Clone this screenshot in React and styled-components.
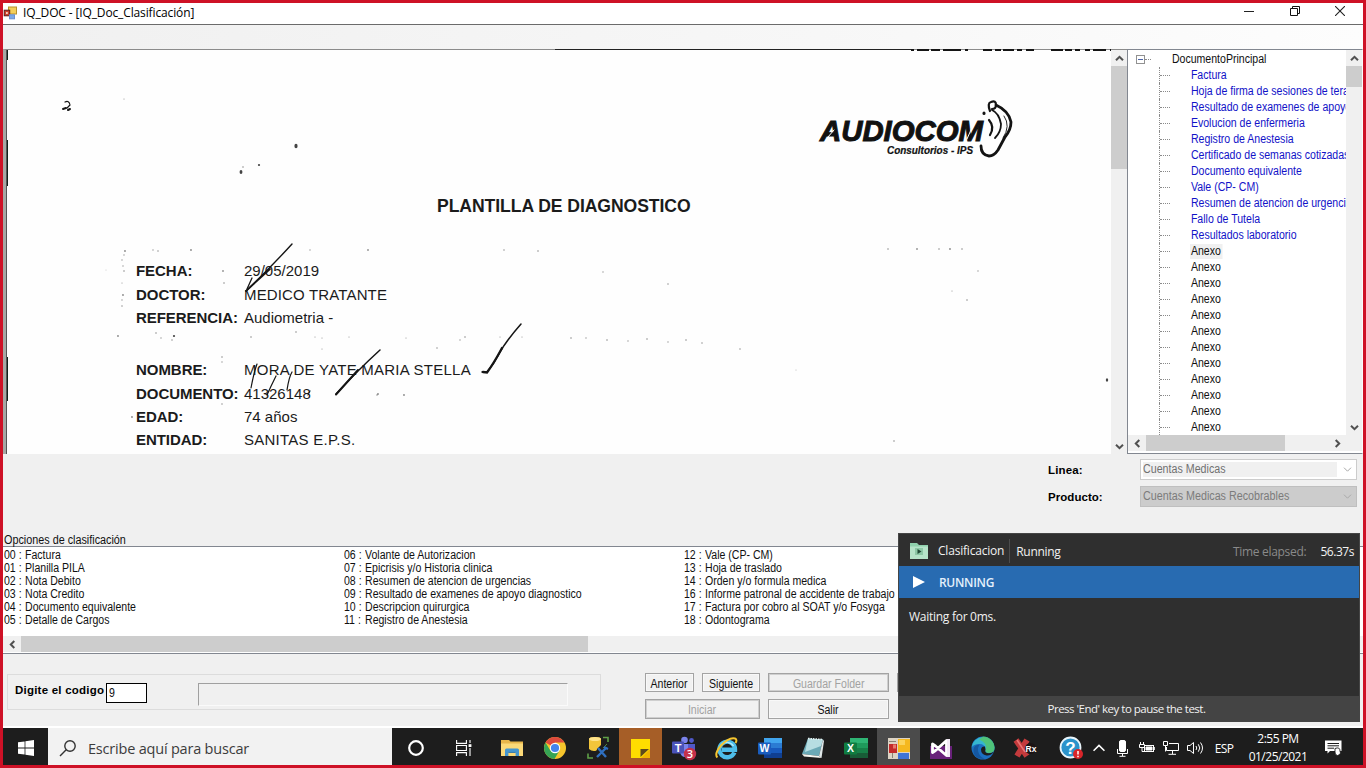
import React from "react";
import styled, { createGlobalStyle, css } from "styled-components";

const Global = createGlobalStyle`
  *, *::before, *::after { box-sizing: border-box; }
  body { margin: 0; background: #f0f0f0; overflow: hidden; }
  svg { display: block; }
`;

const ui = css`
  font-family: "Liberation Sans", Arial, sans-serif;
  font-size: 12px;
  color: #101010;
`;
const segoe = css`
  font-family: "Open Sans", "Noto Sans", sans-serif;
  white-space: nowrap;
`;

/* Condensed lettering of the classic dialog font */
const Narrow = styled.span`
  display: inline-block;
  flex: none;
  transform: scaleX(${(p) => p.$sx || 0.88});
  transform-origin: ${(p) => (p.$center ? "center" : "left")} center;
`;

/* ---------- window ---------- */
const Frame = styled.div`
  position: relative;
  width: 1366px;
  height: 768px;
  border: 3px solid #ce1126;
  display: flex;
  flex-direction: column;
  background: #f0f0f0;
  overflow: hidden;
  ${ui}
  white-space: nowrap;
`;
const TitleBar = styled.header`
  height: 21px;
  flex: none;
  display: flex;
  align-items: center;
  background: #fff;
`;
const AppIcon = styled.svg`
  width: 15px;
  height: 14px;
  margin: 0 5px 2px 0;
`;
const TitleText = styled.span`
  ${segoe}
  flex: 1;
  font-size: 12px;
  letter-spacing: -0.13px;
  line-height: 17px;
  margin-bottom: 3px;
  color: #000;
`;
const WindowButtons = styled.div`
  display: flex;
  padding: 0 0 6px;
`;
const WindowButton = styled.div`
  width: 45.5px;
  display: flex;
  justify-content: center;
`;
const MenuStrip = styled.div`
  height: 25px;
  flex: none;
  border-top: 1px solid #6b6b6b;
  background: linear-gradient(90deg, #f0f0f0, #f7f7f7 60%, #fdfdfd);
`;
const Workspace = styled.main`
  height: 405px;
  flex: none;
  display: flex;
`;

/* ---------- scanned page ---------- */
const Viewer = styled.section`
  width: 1124px;
  flex: none;
  display: flex;
  border-top: 1px solid #8b8b8b;
  border-left: 3px solid #a5a8a5;
  background: #fff;
`;
const Paper = styled.div`
  position: relative;
  flex: 1;
  height: 404px;
  background: #fefefe;
  color: #1b1b1b;
`;
const Marks = styled.svg`
  position: absolute;
  left: 0;
  top: -1px;
`;
const PaperTitle = styled.h1`
  margin: 0;
  padding: 145px 0 0 431px;
  font-size: 17.6px;
  line-height: 22px;
  font-weight: 700;
  letter-spacing: -0.08px;
`;
const Block = styled.dl`
  margin: 0;
  padding: ${(p) => p.$top}px 0 0 130px;
  display: grid;
  grid-template-columns: 108px 1fr;
  grid-auto-rows: 23.35px;
  align-items: center;
  font-size: 15px;
`;
const Term = styled.dt`
  font-weight: 700;
  letter-spacing: -0.05px;
`;
const Value = styled.dd`
  margin: 0;
  letter-spacing: ${(p) => p.$ls || 0}px;
`;

/* ---------- scroll bars ---------- */
const ScrollBar = styled.div`
  display: flex;
  flex: none;
  flex-direction: ${(p) => (p.$h ? "row" : "column")};
  align-items: stretch;
  width: ${(p) => (p.$h ? "auto" : "16px")};
  height: ${(p) => (p.$h ? "16px" : "auto")};
  background: #f0f0f0;
`;
const Arrow = styled.div`
  flex: none;
  width: ${(p) => p.$w || 16}px;
  height: 16px;
  display: flex;
  align-items: center;
  justify-content: center;
`;
const Thumb = styled.div`
  flex: 0 0 ${(p) => p.$len}px;
  background: #cdcdcd;
`;
const Spacer = styled.div`
  flex: 1;
`;

/* ---------- tree ---------- */
const TreePanel = styled.aside`
  flex: 1;
  min-width: 0;
  display: flex;
  flex-direction: column;
  border: 1px solid #828790;
  border-right-color: #fbfbfb;
  background: #fff;
`;
const TreeBody = styled.div`
  height: 385px;
  display: flex;
`;
const TreeList = styled.ul`
  flex: 1;
  min-width: 0;
  margin: 0;
  padding: 1px 0 0 8px;
  list-style: none;
  overflow: hidden;
`;
const TreeRoot = styled.li`
  height: 16px;
  display: flex;
  align-items: center;
`;
const Expander = styled.span`
  width: 9px;
  height: 9px;
  flex: none;
  border: 1px solid #919191;
  display: flex;
  align-items: center;
  justify-content: center;
  &::after { content: ""; width: 5px; height: 1px; background: #4b63a7; }
`;
const Dots = styled.span`
  width: ${(p) => p.$w}px;
  flex: none;
  margin-right: ${(p) => p.$gap}px;
  border-top: 1px dotted #8a8a8a;
`;
const TreeItem = styled.li`
  height: 16px;
  margin-left: 23px;
  display: flex;
  align-items: center;
  border-left: 1px dotted #8a8a8a;
  color: ${(p) => (p.$blue ? "#1212c8" : "#101010")};
`;
const ItemText = styled(Narrow)`
  line-height: 15px;
  padding: 0 2px 0 1px;
  background: ${(p) => (p.$on ? "#f0f0f0" : "transparent")};
`;

/* ---------- fields ---------- */
const Fields = styled.section`
  height: 79px;
  flex: none;
  padding: 5px 6px 0 1045px;
  display: flex;
  flex-direction: column;
  gap: 6px;
`;
const FieldRow = styled.label`
  display: flex;
  align-items: center;
  height: 21px;
`;
const Bold = styled.span`
  width: ${(p) => p.$w}px;
  font-size: 11.5px;
  font-weight: 700;
  letter-spacing: ${(p) => p.$ls ?? 0}px;
  color: #000;
`;
const Combo = styled.span`
  flex: 1;
  height: 21px;
  padding: 1px 4px 1px 2px;
  display: flex;
  align-items: center;
  justify-content: space-between;
  border: 1px solid ${(p) => (p.$grey ? "#bfbfbf" : "#cccccc")};
  background: ${(p) => (p.$grey ? "#cccccc" : "#fff")};
  color: ${(p) => (p.$grey ? "#7b7b7b" : "#707070")};
`;
const ComboText = styled.span`
  width: 194px;
  line-height: 15px;
  background: ${(p) => (p.$grey ? "transparent" : "#f0f0f0")};
`;

/* ---------- options ---------- */
const OptionsTitle = styled.h2`
  margin: 0;
  height: 13px;
  flex: none;
  padding-left: 1px;
  font-size: 12px;
  line-height: 15px;
  font-weight: 400;
`;
const OptionsBox = styled.section`
  height: 108px;
  flex: none;
  display: flex;
  flex-direction: column;
  border-top: 1px solid #828790;
  border-bottom: 1px solid #828790;
  background: #fff;
`;
const OptionGrid = styled.ul`
  height: 89px;
  margin: 0;
  padding: 2px 0 0 1px;
  list-style: none;
  display: grid;
  grid-auto-flow: column;
  grid-template-rows: repeat(6, 13px);
  grid-template-columns: repeat(3, 340px);
  line-height: 13px;
`;
const Option = styled.li`
  display: flex;
`;
const Code = styled.span`
  width: 21px;
`;

/* ---------- bottom controls ---------- */
const Controls = styled.section`
  height: 74px;
  flex: none;
  padding: 19px 0 0 4px;
  display: flex;
  align-items: flex-start;
  border-bottom: 2px solid #fff;
`;
const CodeGroup = styled.div`
  width: 594px;
  height: 36px;
  margin-top: 1px;
  padding: 8px 0 0 7px;
  display: flex;
  line-height: 15px;
  border: 1px solid #dcdcdc;
`;
const CodeInput = styled.div`
  width: 41px;
  height: 20px;
  padding: 3px 2px;
  border: 1px solid #000;
  background: #fff;
  line-height: 13px;
`;
const ReadOnlyBox = styled.div`
  width: 370px;
  height: 23px;
  margin-left: 51px;
  border: 1px solid;
  border-color: #a0a0a0 #fafafa #fafafa #a0a0a0;
`;
const ButtonGrid = styled.div`
  margin-left: 44px;
  display: grid;
  grid-template-columns: 49px 58px 121px 40px;
  grid-template-rows: 19px 20px;
  gap: 7px 8px;
`;
const ButtonBox = styled.div`
  grid-column: span ${(p) => p.$span || 1};
  display: flex;
  align-items: center;
  justify-content: center;
  padding-top: 2px;
  border: 1px solid #a3a3a3;
  background: #f1f1f1;
  box-shadow: inset 0 0 0 1px ${(p) => (p.$off ? "#cfcfcf" : "#f8f8f8")};
  color: ${(p) => (p.$off ? "#a2a2a2" : "#101010")};
`;
const Button = ({ children, ...rest }) => (
  <ButtonBox {...rest}>{children && <Narrow $center>{children}</Narrow>}</ButtonBox>
);

/* ---------- test runner popup ---------- */
const Runner = styled.section`
  position: absolute;
  left: 895px;
  top: 530px;
  width: 462px;
  height: 189px;
  display: flex;
  flex-direction: column;
  background: #2f2f2f;
  border: 1px solid #454545;
  color: #f2f2f2;
  font-size: 12px;
  ${segoe}
`;
const RunnerHead = styled.div`
  height: 32px;
  flex: none;
  display: flex;
  align-items: center;
  padding: 2px 5px 0 11px;
`;
const RunnerName = styled.span`
  margin-left: 10px;
  padding-right: 5px;
  line-height: 24px;
  border-right: 1px solid #4c4c4c;
  letter-spacing: -0.2px;
`;
const RunnerState = styled.span`
  flex: 1;
  padding-left: 6px;
  letter-spacing: -0.3px;
`;
const Muted = styled.span`
  color: #8a8a8a;
  margin-right: 14px;
  letter-spacing: -0.3px;
`;
const Elapsed = styled.span`
  letter-spacing: -0.45px;
`;
const RunnerBanner = styled.div`
  height: 32px;
  flex: none;
  display: flex;
  align-items: center;
  gap: 14px;
  padding-left: 14px;
  background: #286bb1;
  font-weight: 600;
  letter-spacing: -0.3px;
  color: #e4f0fb;
`;
const RunnerBody = styled.div`
  flex: 1;
  padding: 10px;
  letter-spacing: -0.27px;
`;
const RunnerFoot = styled.div`
  height: 25px;
  text-align: center;
  line-height: 26px;
  padding-right: 5px;
  background: #444;
  font-size: 11.5px;
  letter-spacing: -0.5px;
`;

/* ---------- taskbar ---------- */
const Taskbar = styled.footer`
  height: 37px;
  flex: none;
  display: flex;
  background: #1d1d1d;
  color: #fff;
  ${segoe}
`;
const Cell = styled.div`
  width: ${(p) => p.$w}px;
  flex: none;
  margin-left: ${(p) => p.$ml || 0}px;
  padding-top: 3px;
  display: flex;
  align-items: center;
  justify-content: center;
  background: ${(p) => p.$bg || "transparent"};
`;
const Search = styled.div`
  width: 344px;
  flex: none;
  padding: 3px 0 0 11px;
  display: flex;
  align-items: center;
  gap: 11px;
  background: #f2f2f2;
  color: #3c3c3c;
  font-size: 14.5px;
  letter-spacing: -0.2px;
`;
const Lang = styled.span`
  font-size: 12px;
  letter-spacing: -0.6px;
`;
const Clock = styled.div`
  display: flex;
  flex-direction: column;
  align-items: center;
  font-size: 12px;
  line-height: 18px;
  letter-spacing: -0.5px;
`;

/* ---------- data ---------- */
const treeItems = [
  "Factura",
  "Hoja de firma de sesiones de terapia",
  "Resultado de examenes de apoyo diagnostico",
  "Evolucion de enfermeria",
  "Registro de Anestesia",
  "Certificado de semanas cotizadas",
  "Documento equivalente",
  "Vale (CP- CM)",
  "Resumen de atencion de urgencias",
  "Fallo de Tutela",
  "Resultados laboratorio",
];
const annexes = Array.from({ length: 12 }, (_, i) => i);
const options = [
  ["00", "Factura"],
  ["01", "Planilla PILA"],
  ["02", "Nota Debito"],
  ["03", "Nota Credito"],
  ["04", "Documento equivalente"],
  ["05", "Detalle de Cargos"],
  ["06", "Volante de Autorizacion"],
  ["07", "Epicrisis y/o Historia clinica"],
  ["08", "Resumen de atencion de urgencias"],
  ["09", "Resultado de examenes de apoyo diagnostico"],
  ["10", "Descripcion quirurgica"],
  ["11", "Registro de Anestesia"],
  ["12", "Vale (CP- CM)"],
  ["13", "Hoja de traslado"],
  ["14", "Orden y/o formula medica"],
  ["16", "Informe patronal de accidente de trabajo"],
  ["17", "Factura por cobro al SOAT y/o Fosyga"],
  ["18", "Odontograma"],
];

/* ---------- drawings ---------- */
const angles = { up: 0, right: 90, down: 180, left: 270 };
const Chevron = ({ dir, color = "#505050", size = 9, thin }) => (
  <svg width={size} height={size} viewBox="0 0 9 9">
    <path
      d="M1 6.3 L4.5 2.8 L8 6.3"
      fill="none"
      stroke={color}
      strokeWidth={thin ? 1 : 2}
      transform={`rotate(${angles[dir]} 4.5 4.5)`}
    />
  </svg>
);

const specks = [
  [118, 49, 0.7], [235, 122, 1.8, 2.4], [237, 117, 1], [253, 115, 1.4], [290, 96, 2, 2.8],
  [119, 201, 1.2], [118, 205, 0.8], [116, 210, 0.8], [117, 216, 0.8], [118, 221, 1], [116, 233, 0.7],
  [117, 245, 1.2], [116, 250, 0.8], [116, 256, 0.9], [147, 200, 0.8], [152, 201, 0.9], [185, 200, 1.2],
  [304, 200, 0.8], [362, 200, 1.1], [498, 200, 0.9], [532, 201, 1], [597, 222, 0.8], [662, 234, 0.9],
  [217, 221, 1.1], [218, 233, 1], [882, 199, 1], [911, 199, 1.1], [933, 199, 1], [944, 199, 1.2], [956, 199, 1],
  [972, 221, 0.8], [961, 250, 1], [946, 241, 0.7], [112, 286, 1.2], [150, 283, 1], [155, 288, 0.8], [168, 286, 1.4],
  [166, 290, 0.9], [245, 287, 1], [290, 282, 1], [309, 287, 0.7], [316, 288, 0.7], [343, 287, 0.7],
  [400, 288, 0.7], [431, 298, 0.9], [454, 290, 0.8], [459, 287, 1], [494, 287, 0.7], [516, 287, 0.7],
  [565, 288, 1], [580, 288, 0.8], [601, 290, 1], [622, 291, 0.8], [641, 289, 1], [662, 292, 0.8], [680, 290, 1], [696, 293, 0.9], [734, 299, 0.9],
  [790, 320, 0.6], [216, 307, 1], [216, 312, 0.8], [216, 354, 0.9], [371, 345, 0.9], [372, 344, 1.2],
  [398, 345, 1.2], [1101, 330, 1.5, 2.2], [888, 391, 1], [126, 367, 1.2], [316, 299, 0.7], [100, 220, 0.5],
];

const ScanMarks = () => (
  <Marks width="1105" height="405" viewBox="0 -1 1105 405">
    <g fill="none" stroke="#151515">
      <path d="M1 0V10 M1 90V136 M1 307V351" stroke="#10201a" strokeWidth="2" />
      <path d="M0.5 0V404" stroke="#555" />
      <path d="M549 -0.5H905" stroke="#222" />
      <path
        d="M905 -0.3h3 m3 0h12 m2 0h9 m3 0h18 m4 0h3 M977 -0.3h9 m3 0h6 m2 0h11 m3 0h5 m4 0h8 M1045 -0.3h12 m2 0h7 m3 0h5 m5 0h5 m3 0h13 m4 0h1"
        strokeWidth="2.4"
      />
    </g>
    <g fill="none" stroke="#151515" strokeLinecap="round">
      <path d="M59 52q4 -2 5 3l-3 3" strokeWidth="1.2" />
      <path d="M57 59l3 -1 M62 60l2 -1" strokeWidth="2" />
      <path d="M286 194Q266 216 240 241" strokeWidth="1.4" />
      <path d="M264 219L240 241" strokeWidth="1.7" />
      <path d="M246 228l-5 11" strokeWidth="1.3" />
      <path d="M515 274Q500 291 493 304Q488 314 481 322l-5 0" strokeWidth="1.5" />
      <path d="M496 298Q488 313 481 322.5l-4 -0.5" strokeWidth="2.3" />
      <path d="M374 300Q352 320 330 344" strokeWidth="1.5" />
      <path d="M352 320L330 344.5" strokeWidth="2" />
      <path d="M251 314q-3 8 -6 24 M270 326q-5 10 -9 19 M286 322q-3 5 -5 18" strokeWidth="1.2" />
      <path d="M304 341l-2 4" strokeWidth="1" />
    </g>
    <g fill="#444">
      {specks.map(([x, y, w, h], i) => (
        <ellipse key={i} cx={x} cy={y} rx={w * 0.8} ry={(h || w) * 0.8} opacity={w > 1.3 ? 1 : 0.6} />
      ))}
    </g>
    <g fill="#111" stroke="#111" fontFamily="Liberation Sans, Arial, sans-serif" fontWeight="700" fontStyle="italic">
      <text x="814" y="90.5" fontSize="30" strokeWidth="1" textLength="163" lengthAdjust="spacingAndGlyphs">AUDIOCOM</text>
      <text x="881" y="104" fontSize="10" strokeWidth="0.2" textLength="86" lengthAdjust="spacingAndGlyphs">Consultorios - IPS</text>
    </g>
    <g fill="none" stroke="#131313" strokeLinecap="round" strokeLinejoin="round">
      <path d="M984 61q-3 -8 1 -9q5 -2 5 3q0 4 -4 4" strokeWidth="2.2" />
      <path d="M990 55q13 6 15 17q0 8 -6 15l-7 13q-4 6 -9 6q-8 -1 -8 -10" strokeWidth="2.8" />
      <path d="M986 60q7 3 9 14q0 8 -6 14" strokeWidth="1.8" />
      <path d="M983 70q6 7 1 15" strokeWidth="2.2" />
      <path d="M998 66q7 10 -1 22" strokeWidth="0.9" />
      <path d="M978 63v0.5" strokeWidth="3" />
      <path d="M822 87l6 -7 M961 89l7 -16" stroke="#fff" strokeWidth="1" />
    </g>
  </Marks>
);

const FormIcon = () => (
  <AppIcon viewBox="0 0 15 14">
    <rect x="5.5" y="1" width="8" height="7" fill="#f3cf5b" stroke="#b8912c" />
    <rect x="1.2" y="4.2" width="5.5" height="5.6" fill="#c93e2d" stroke="#5a1a18" />
    <rect x="3" y="6" width="1.8" height="2" fill="#f2d0c0" />
    <rect x="6.5" y="8.8" width="5" height="4" fill="#7aa8e8" stroke="#6a8fd0" />
  </AppIcon>
);

const WinLogo = () => (
  <svg width="16" height="16" viewBox="0 0 16 16" fill="#fff">
    <path d="M0 2.3L6.6 1.4V7.6H0z M7.4 1.3L16 0V7.6H7.4z M0 8.4H6.6V14.6L0 13.7z M7.4 8.4H16V16L7.4 14.8z" />
  </svg>
);
const Magnifier = () => (
  <svg width="18" height="18" viewBox="0 0 18 18" fill="none" stroke="#333" strokeWidth="1.4">
    <circle cx="11" cy="7" r="5.2" />
    <path d="M7.2 10.8L1 17" />
  </svg>
);
const Cortana = () => (
  <svg width="16" height="16" viewBox="0 0 16 16">
    <circle cx="8" cy="8" r="6.8" fill="none" stroke="#fff" strokeWidth="2.2" />
  </svg>
);
const TaskView = () => (
  <svg width="16" height="16" viewBox="0 0 16 16" fill="none" stroke="#fff" strokeWidth="1.1">
    <path d="M0.6 0V3.4H10.4V0 M0.6 16V12.6H10.4V16 M0.6 5.5H10.4V10.5H0.6z M14 0V3 M14 8V16" />
    <rect x="12.6" y="4.2" width="2.8" height="2.8" fill="#fff" stroke="none" />
  </svg>
);
const Explorer = () => (
  <svg width="22" height="18" viewBox="0 0 22 18">
    <path d="M0 1h8l1.5 1.5H22V17H0z" fill="#e8b64a" />
    <path d="M0 4.5H22V17H0z" fill="#fbd978" />
    <path d="M4 17v-6q0-1.5 1.5-1.5h11q1.5 0 1.5 1.5v6h-3.4v-3.6H7.4V17z" fill="#4596cf" />
    <path d="M7.4 13.4h7.2" stroke="#2f77ad" />
  </svg>
);
const Chrome = () => (
  <svg width="22" height="22" viewBox="0 0 22 22">
    <circle cx="11" cy="11" r="11" fill="#f6c52c" />
    <path d="M11 11L1.5 5.5A11 11 0 0 1 20.5 5.5H11z" fill="#dd4a3d" />
    <path d="M1.5 5.5A11 11 0 0 0 10.5 22L15.5 13.6 11 11 6.3 13.6z" fill="#36a455" />
    <circle cx="11" cy="11" r="5.2" fill="#fff" />
    <circle cx="11" cy="11" r="4.1" fill="#4484ec" />
  </svg>
);
const DataTool = () => (
  <svg width="24" height="24" viewBox="0 0 24 24" fill="none">
    <path d="M3 3q0-2 6-2t6 2v6l-4 4q0 2-3 2t-5-2z" fill="#f3c53a" />
    <ellipse cx="9" cy="3" rx="6" ry="2" fill="#ffe38a" />
    <path d="M17 1.5h5V6" stroke="#5fa048" strokeWidth="1.6" />
    <path d="M2 17.5V22h5" stroke="#5fa048" strokeWidth="1.6" />
    <path d="M21 8L17 12" stroke="#4b8a3c" />
    <path d="M12 12L20 21 M20 12L11 21" stroke="#2f6fc0" strokeWidth="2.4" />
    <path d="M18 11l4 2" stroke="#2f6fc0" strokeWidth="2" />
  </svg>
);
const Sticky = () => (
  <svg width="19" height="19" viewBox="0 0 19 19">
    <path d="M0 0H19V19H0z" fill="#ffdd00" />
    <path d="M9.5 10H18L9.5 18z" fill="#5e4a1c" />
    <path d="M10 19L19 10V19z" fill="#f0b400" />
  </svg>
);
const iconFont = { fontFamily: "Liberation Sans, Arial, sans-serif", fontWeight: 700 };
const Teams = () => (
  <svg width="26" height="25" viewBox="0 0 26 25">
    <circle cx="13.5" cy="4" r="3.3" fill="#7b83eb" />
    <circle cx="20.5" cy="4.5" r="2.4" fill="#5059c9" />
    <path d="M9 8h10v8q-1 5-5 5t-5-5z" fill="#7b83eb" />
    <path d="M17 8h7v6q-1 4-4 4h-3z" fill="#5059c9" />
    <rect x="1" y="5.5" width="12" height="12" rx="1" fill="#4a52b8" />
    <text x="7" y="15.5" fontSize="11" fill="#fff" textAnchor="middle" {...iconFont}>T</text>
    <circle cx="19" cy="18" r="6.2" fill="#c4314b" />
    <text x="19" y="22" fontSize="11" fill="#fff" textAnchor="middle" fontFamily="Open Sans, sans-serif" fontWeight="600">3</text>
  </svg>
);
const Explorer11 = () => (
  <svg width="23" height="23" viewBox="0 0 23 23" fill="none">
    <path d="M19.4 15.5A7.8 7.8 0 1 1 20 12.8H7" stroke="#4dbdea" strokeWidth="4.4" />
    <path d="M18.5 9A7.8 7.8 0 0 0 6 8" stroke="#b5ebfc" strokeWidth="1.4" />
    <path d="M2.4 20.5Q-1 17 6 8.5Q14 0 20 1.5Q22.5 2.5 20.5 6" stroke="#f6c630" strokeWidth="2" />
  </svg>
);
const Office = ({ letter, a, b, c, d, side }) => (
  <svg width="24" height="20" viewBox="0 0 24 20">
    <rect x="6" y="0" width="18" height="5" fill={a} />
    <rect x="6" y="5" width="18" height="5" fill={b} />
    <rect x="6" y="10" width="18" height="5" fill={c} />
    <rect x="6" y="15" width="18" height="5" fill={d} />
    <rect x="0" y="4.5" width="13" height="12" rx="1" fill={side} />
    <text x="6.5" y="14.3" fontSize="10.5" fill="#fff" textAnchor="middle" {...iconFont}>{letter}</text>
  </svg>
);
const Notepad = () => (
  <svg width="24" height="22" viewBox="0 0 24 22">
    <path d="M7 1.5L22 2.5 18 19 1 17z" fill="#6ba9b6" />
    <path d="M7 1.5L22 2.5 20 9 4 15z" fill="#b6dde2" />
    <path d="M22 2.5L23 4 20.5 21 18 19z" fill="#dfe7e8" />
    <path d="M1 17L18 19 20.5 21 3 19.5z" fill="#f5f5f0" />
    <path d="M7 1.5L22 2.5" stroke="#e8f4f4" strokeWidth="1.5" strokeDasharray="1.5 1" />
  </svg>
);
const FormsApp = () => (
  <svg width="22" height="21" viewBox="0 0 22 21">
    <rect x="0" y="0" width="22" height="21" fill="#dcd3c4" />
    <rect x="1" y="6" width="8" height="9" fill="#c42b2b" />
    <rect x="5" y="6.5" width="3" height="4" fill="#e87a6a" />
    <rect x="10" y="1" width="12" height="13" fill="#f5b81f" />
    <rect x="11" y="2" width="6" height="5" fill="#fbd35c" />
    <rect x="10" y="15" width="11" height="6" fill="#3f74d6" />
    <path d="M1 3.5H8 M4.5 15V20" stroke="#8b8478" />
  </svg>
);
const VisualStudio = () => (
  <svg width="22" height="22" viewBox="0 0 22 22">
    <path d="M0 9H22V22H0z" fill="#68217a" />
    <path
      d="M2.5 7V15.5L5.5 13.5L16.5 3.5V18.5L5.5 9z"
      fill="none"
      stroke="#fff"
      strokeWidth="2.8"
      strokeLinejoin="round"
    />
    <path d="M18.5 2V20" stroke="#f3e9f6" strokeWidth="3" />
  </svg>
);
const Edge = () => (
  <svg width="24" height="24" viewBox="0 0 24 24">
    <circle cx="12" cy="12" r="11.5" fill="#1b6fc0" />
    <path d="M0.6 11.5A11.5 11.5 0 0 1 23.5 11.5Q23.5 17 18 17Q13.5 17 14.5 13.5Q14 8 8.5 8Q2.5 8 0.6 11.5z" fill="#35b6cf" />
    <path d="M12 0.5A11.5 11.5 0 0 1 23.5 11.5Q23.5 17 18 17Q14 17 14.5 14Q17 7 8 3.5z" fill="#53c66b" opacity="0.85" />
    <path d="M14.5 13.5Q13 17 18 17.2Q21 17 23 15.5Q20 20 15.5 19.5Q10 18.5 10 13.5Q10.5 10 14 10.5z" fill="#1d1d1d" />
    <path d="M7 12Q6 19 13.5 23Q2 23 2.5 13.5Q3 9 8.5 8.5Z" fill="#1557a0" />
  </svg>
);
const RedRx = () => (
  <svg width="26" height="22" viewBox="0 0 26 22">
    <path d="M4 3L15 19 M15 3L5 19" stroke="#c33a3c" strokeWidth="6" fill="none" />
    <path d="M5 3L13 15" stroke="#ea7575" strokeWidth="1.5" />
    <circle cx="18.5" cy="11.5" r="5.5" fill="#1b1314" />
    <text x="19" y="14.5" fontSize="8.5" fill="#fff" textAnchor="middle" {...iconFont}>Rx</text>
  </svg>
);
const Help = () => (
  <svg width="24" height="24" viewBox="0 0 24 24">
    <circle cx="11.5" cy="11.5" r="10" fill="#2b93cb" stroke="#e9f5fb" strokeWidth="1.8" />
    <text x="11.5" y="17.5" fontSize="17" fill="#fff" textAnchor="middle" {...iconFont}>?</text>
    <circle cx="19" cy="18" r="5" fill="#d9252a" />
    <path d="M19 15v3.6 M19 19.8v1.4" stroke="#fff" strokeWidth="1.5" />
  </svg>
);
const Mic = () => (
  <svg width="11" height="17" viewBox="0 0 11 17" fill="none" stroke="#fff">
    <rect x="2.5" y="0.5" width="6" height="11" rx="1.5" fill="#fff" />
    <path d="M0.5 9V13.5H10.5V9 M5.5 13.5V16 M2.5 16.3H8.5" />
  </svg>
);
const Battery = () => (
  <svg width="16" height="12" viewBox="0 0 16 12" fill="none" stroke="#fff">
    <rect x="5.5" y="3.5" width="9" height="6" />
    <path d="M7 5H13V8H7z" fill="#fff" />
    <path d="M15.3 5v3 M1.5 0v2.5 M4.5 0v2.5 M0.5 2.5H5.5V5.5H0.5z M3 5.5V9.5H6" />
  </svg>
);
const Network = () => (
  <svg width="17" height="14" viewBox="0 0 17 14" fill="none" stroke="#fff">
    <path d="M6 2.5H15.5V9.5H3.5V6 M9.5 9.5V13 M5.5 13.3H13 M0.5 0.5H4.5V4.5H0.5z M2.5 4.5V10.5" />
  </svg>
);
const Volume = () => (
  <svg width="17" height="14" viewBox="0 0 17 14" fill="none" stroke="#fff">
    <path d="M0.5 4.5H3L6.5 1.5V12.5L3 9.5H0.5z M9 5q1.5 2 0 4 M11.3 3.3q3 3.7 0 7.4 M13.5 1.5q4 5.5 0 11" />
  </svg>
);
const Notice = () => (
  <svg width="17" height="16" viewBox="0 0 17 16">
    <path d="M0 0.5H16.5V11H5L2.5 13.5V11H0z" fill="#fff" />
    <path d="M2.5 3.5H14 M2.5 5.8H14 M2.5 8.2H9" stroke="#1d1d1d" />
    <path d="M10 8.5q5 -2 5 2.5q1.5 3.5 -2.5 4.5q-3 -0.5 -2.5 -4z" fill="#fff" stroke="#1d1d1d" strokeWidth="0.9" />
  </svg>
);

const apps = [
  [43, <Explorer />],
  [43, <Chrome />],
  [43, <DataTool />],
  [43, <Sticky />, "#a65e27"],
  [43, <Teams />],
  [43, <Explorer11 />],
  [43, <Office letter="W" a="#41a5ee" b="#2b7cd3" c="#185abd" d="#103f91" side="#1a5dbe" />],
  [43, <Notepad />],
  [43, <Office letter="X" a="#2fb574" b="#1f9a5b" c="#178048" d="#185c37" side="#107c41" />],
  [43, <FormsApp />, "#4b4b4b"],
  [42, <VisualStudio />],
  [42, <Edge />],
  [42, <RedRx />],
];
const tray = [
  [30, <Help />],
  [25, <Chevron dir="up" color="#fff" size={14} thin />],
  [23, <Mic />],
  [26, <Battery />],
  [22, <Network />],
  [26, <Volume />],
  [32, <Lang>ESP</Lang>],
];

export default function App() {
  return (
    <>
      <Global />
      <Frame>
        <TitleBar>
          <FormIcon />
          <TitleText>IQ_DOC - [IQ_Doc_Clasificación]</TitleText>
          <WindowButtons>
            <WindowButton>
              <svg width="10" height="10"><path d="M0 5.5H10" stroke="#222" /></svg>
            </WindowButton>
            <WindowButton>
              <svg width="10" height="10" fill="none" stroke="#111">
                <path d="M0.5 2.5H7.5V9.5H0.5z M2.5 2.5V0.5H9.5V7.5H7.5" />
              </svg>
            </WindowButton>
            <WindowButton>
              <svg width="10" height="10"><path d="M0 0L10 10 M10 0L0 10" stroke="#222" strokeWidth="1.1" /></svg>
            </WindowButton>
          </WindowButtons>
        </TitleBar>
        <MenuStrip />

        <Workspace>
          <Viewer>
            <Paper>
              <PaperTitle>PLANTILLA DE DIAGNOSTICO</PaperTitle>
              <Block $top={42}>
                <Term>FECHA:</Term><Value>29/05/2019</Value>
                <Term>DOCTOR:</Term><Value $ls={0.15}>MEDICO TRATANTE</Value>
                <Term>REFERENCIA:</Term><Value>Audiometria -</Value>
              </Block>
              <Block $top={29}>
                <Term>NOMBRE:</Term><Value $ls={0.24}>MORA DE YATE MARIA STELLA</Value>
                <Term>DOCUMENTO:</Term><Value>41326148</Value>
                <Term>EDAD:</Term><Value>74 años</Value>
                <Term>ENTIDAD:</Term><Value $ls={0.25}>SANITAS E.P.S.</Value>
              </Block>
              <ScanMarks />
            </Paper>
            <ScrollBar>
              <Arrow><Chevron dir="up" /></Arrow>
              <Thumb $len={103} />
              <Spacer />
              <Arrow><Chevron dir="down" /></Arrow>
            </ScrollBar>
          </Viewer>

          <TreePanel>
            <TreeBody>
              <TreeList>
                <TreeRoot>
                  <Expander /><Dots $w={6} $gap={20} />
                  <ItemText>DocumentoPrincipal</ItemText>
                </TreeRoot>
                {treeItems.map((t) => (
                  <TreeItem key={t} $blue>
                    <Dots $w={10} $gap={20} /><ItemText>{t}</ItemText>
                  </TreeItem>
                ))}
                {annexes.map((i) => (
                  <TreeItem key={i}>
                    <Dots $w={10} $gap={20} /><ItemText $on={i === 0}>Anexo</ItemText>
                  </TreeItem>
                ))}
              </TreeList>
              <ScrollBar>
                <Arrow><Chevron dir="up" /></Arrow>
                <Thumb $len={21} />
                <Spacer />
                <Arrow><Chevron dir="down" /></Arrow>
              </ScrollBar>
            </TreeBody>
            <ScrollBar $h>
              <Arrow $w={18}><Chevron dir="left" /></Arrow>
              <Thumb $len={139} />
              <Spacer />
              <Arrow $w={18}><Chevron dir="right" /></Arrow>
              <Arrow $w={16} />
            </ScrollBar>
          </TreePanel>
        </Workspace>

        <Fields>
          <FieldRow>
            <Bold $w={92} $ls={0.15}>Linea:</Bold>
            <Combo>
              <ComboText><Narrow $sx={0.89}>Cuentas Medicas</Narrow></ComboText>
              <Chevron dir="down" color="#a8a8a8" thin />
            </Combo>
          </FieldRow>
          <FieldRow>
            <Bold $w={92} $ls={0.05}>Producto:</Bold>
            <Combo $grey>
              <ComboText $grey><Narrow $sx={0.895}>Cuentas Medicas Recobrables</Narrow></ComboText>
              <Chevron dir="down" color="#aaa" thin />
            </Combo>
          </FieldRow>
        </Fields>

        <OptionsTitle><Narrow $sx={0.9}>Opciones de clasificación</Narrow></OptionsTitle>
        <OptionsBox>
          <OptionGrid>
            {options.map(([code, text]) => (
              <Option key={code}>
                <Code><Narrow>{code} :</Narrow></Code><Narrow>{text}</Narrow>
              </Option>
            ))}
          </OptionGrid>
          <ScrollBar $h>
            <Arrow $w={18}><Chevron dir="left" /></Arrow>
            <Thumb $len={567} />
            <Spacer />
          </ScrollBar>
        </OptionsBox>

        <Controls>
          <CodeGroup>
            <Bold $w={91} $ls={0.22}>Digite el codigo</Bold>
            <CodeInput><Narrow>9</Narrow></CodeInput>
            <ReadOnlyBox />
          </CodeGroup>
          <ButtonGrid>
            <Button>Anterior</Button>
            <Button>Siguiente</Button>
            <Button $off>Guardar Folder</Button>
            <Button />
            <Button $off $span={2}>Iniciar</Button>
            <Button>Salir</Button>
          </ButtonGrid>
        </Controls>

        <Taskbar>
          <Cell $w={45}><WinLogo /></Cell>
          <Search><Magnifier />Escribe aquí para buscar</Search>
          <Cell $w={48}><Cortana /></Cell>
          <Cell $w={47}><TaskView /></Cell>
          {apps.map(([w, icon, bg], i) => (
            <Cell key={i} $w={w} $bg={bg} $ml={i === 0 ? 3 : 0}>{icon}</Cell>
          ))}
          {tray.map(([w, icon], i) => (
            <Cell key={i} $w={w} $ml={i === 0 ? 10 : 0}>{icon}</Cell>
          ))}
          <Cell $w={76}>
            <Clock><span>2:55 PM</span><span>01/25/2021</span></Clock>
          </Cell>
          <Cell $w={34}><Notice /></Cell>
        </Taskbar>

        <Runner>
          <RunnerHead>
            <svg width="18" height="16" viewBox="0 0 18 16">
              <path d="M0 0H7L9 2H18V16H0z" fill="#8fd0ac" />
              <path d="M0 3.5H18V16H0z" fill="#b5e3c8" />
              <rect x="5" y="5" width="8" height="7" fill="#8cc7a5" />
              <path d="M7.5 6L11.5 8.5 7.5 11z" fill="#1f4a35" />
            </svg>
            <RunnerName>Clasificacion</RunnerName>
            <RunnerState>Running</RunnerState>
            <Muted>Time elapsed:</Muted>
            <Elapsed>56.37s</Elapsed>
          </RunnerHead>
          <RunnerBanner>
            <svg width="12" height="12"><path d="M0 0L12 6L0 12z" fill="#fff" /></svg>
            RUNNING
          </RunnerBanner>
          <RunnerBody>Waiting for 0ms.</RunnerBody>
          <RunnerFoot>Press 'End' key to pause the test.</RunnerFoot>
        </Runner>
      </Frame>
    </>
  );
}
